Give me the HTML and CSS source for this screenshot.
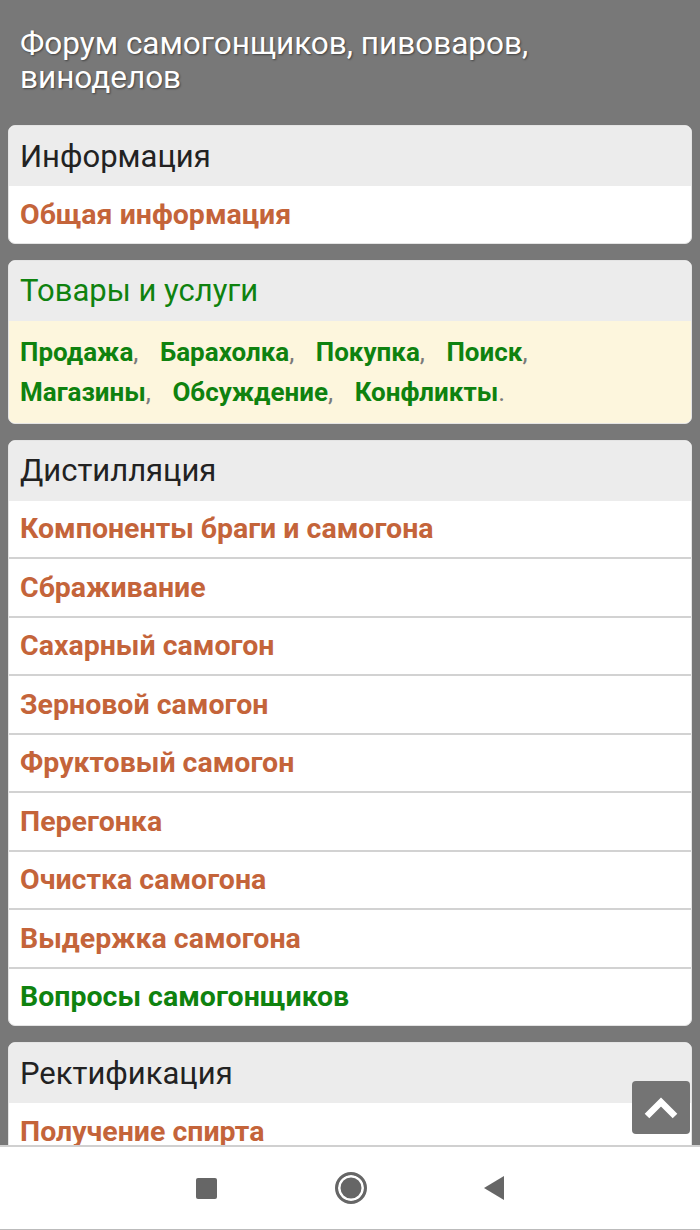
FILE: index.html
```html
<!DOCTYPE html>
<html lang="ru">
  <head>
    <meta charset="UTF-8" />
    <meta name="viewport" content="width=device-width, initial-scale=1" />
    <title>Форум самогонщиков, пивоваров, виноделов</title>
    <link rel="stylesheet" href="styles.css">
  </head>
  <body>
    <div id="page">
      <h1 class="site-title">Форум самогонщиков, пивоваров, виноделов</h1>

      <div class="forums">
        <div class="card">
          <div class="card-head">Информация</div>
          <a class="row" href="#">Общая информация</a>
        </div>

        <div class="card">
          <div class="card-head green">Товары и услуги</div>
          <div class="tags">
            <a class="tag" href="#">Продажа<span class="sep">,</span></a>
            <a class="tag" href="#">Барахолка<span class="sep">,</span></a>
            <a class="tag" href="#">Покупка<span class="sep">,</span></a>
            <a class="tag" href="#">Поиск<span class="sep">,</span></a>
            <a class="tag" href="#">Магазины<span class="sep">,</span></a>
            <a class="tag" href="#">Обсуждение<span class="sep">,</span></a>
            <a class="tag" href="#">Конфликты<span class="sep">.</span></a>
          </div>
        </div>

        <div class="card">
          <div class="card-head">Дистилляция</div>
          <a class="row" href="#">Компоненты браги и самогона</a>
          <a class="row" href="#">Сбраживание</a>
          <a class="row" href="#">Сахарный самогон</a>
          <a class="row" href="#">Зерновой самогон</a>
          <a class="row" href="#">Фруктовый самогон</a>
          <a class="row" href="#">Перегонка</a>
          <a class="row" href="#">Очистка самогона</a>
          <a class="row" href="#">Выдержка самогона</a>
          <a class="row green" href="#">Вопросы самогонщиков</a>
        </div>

        <div class="card">
          <div class="card-head">Ректификация</div>
          <a class="row" href="#">Получение спирта</a>
        </div>
      </div>

      <a id="toTop" href="#">
        <svg width="34" height="22" viewBox="0 0 34 22">
          <path d="M3 19 L17 5 L31 19" fill="none" stroke="#fff" stroke-width="6.5" stroke-linejoin="miter" />
        </svg>
      </a>
    </div>

    <!-- android nav bar -->
    <div id="navbar">
      <span class="nav-square"></span>
      <span class="nav-home"></span>
      <svg class="nav-back" width="20" height="24" viewBox="0 0 20 24">
        <path d="M20 0 L20 24 L0 12 Z" fill="#666" />
      </svg>
    </div>
  </body>
</html>
```

FILE: styles.css
```css
html,
body {
  margin: 0;
  height: 100%;
}
body {
  display: flex;
  flex-direction: column;
  overflow: hidden;
  background: #787878;
  font-family: Roboto, "Noto Sans", sans-serif;
}
a {
  text-decoration: none;
}
#page {
  position: relative;
  flex: 1;
  overflow: hidden;
}
.site-title {
  margin: 0;
  padding: 27px 20px 30px;
  font-size: 31.5px;
  font-weight: normal;
  line-height: 34px;
  color: #fff;
  text-shadow: 1px 1px 2px rgba(0, 0, 0, 0.45);
}
.forums {
  display: flex;
  flex-direction: column;
  gap: 16px;
  padding: 0 8px;
}
.card {
  background: #fff;
  border: 1px solid #e4e4e4;
  border-radius: 7px;
  overflow: hidden;
}
.card-head {
  height: 60px;
  display: flex;
  align-items: center;
  padding: 0 11px;
  background: #ececec;
  color: #222;
  font-size: 31px;
}
.card-head.green {
  color: #0f820f;
}
.row {
  display: flex;
  align-items: center;
  height: 56.5px;
  padding: 0 11px;
  border-bottom: 2px solid #d2d2d2;
  color: #c4643a;
  font-size: 28.5px;
  font-weight: bold;
}
.row:last-child {
  border-bottom: none;
}
.row.green {
  color: #0f820f;
}
.tags {
  padding: 11px 60px 11px 11px;
  background: #fdf6dd;
  font-size: 26px;
  line-height: 40px;
}
.tag {
  margin-right: 15px;
  color: #0f820f;
  font-weight: bold;
}
.sep {
  color: #7a7a7a;
  font-weight: normal;
}
#toTop {
  position: absolute;
  right: 10px;
  bottom: 11px;
  width: 58px;
  height: 53px;
  display: flex;
  align-items: center;
  justify-content: center;
  background: #747474;
  border-radius: 4px;
}
#navbar {
  height: 82px;
  flex-shrink: 0;
  display: flex;
  align-items: center;
  justify-content: center;
  background: #fff;
  border-top: 2px solid #d0d0d0;
  border-bottom: 1px solid #bbb;
}
.nav-square {
  width: 21px;
  height: 21px;
  border-radius: 2px;
  background: #666;
  margin-right: 118px;
}
.nav-home {
  width: 26px;
  height: 26px;
  border: 3px solid #666;
  border-radius: 50%;
  background: #666;
  box-shadow: inset 0 0 0 2.5px #fff;
  margin-right: 117px;
}
.nav-back {
  display: block;
}
```
